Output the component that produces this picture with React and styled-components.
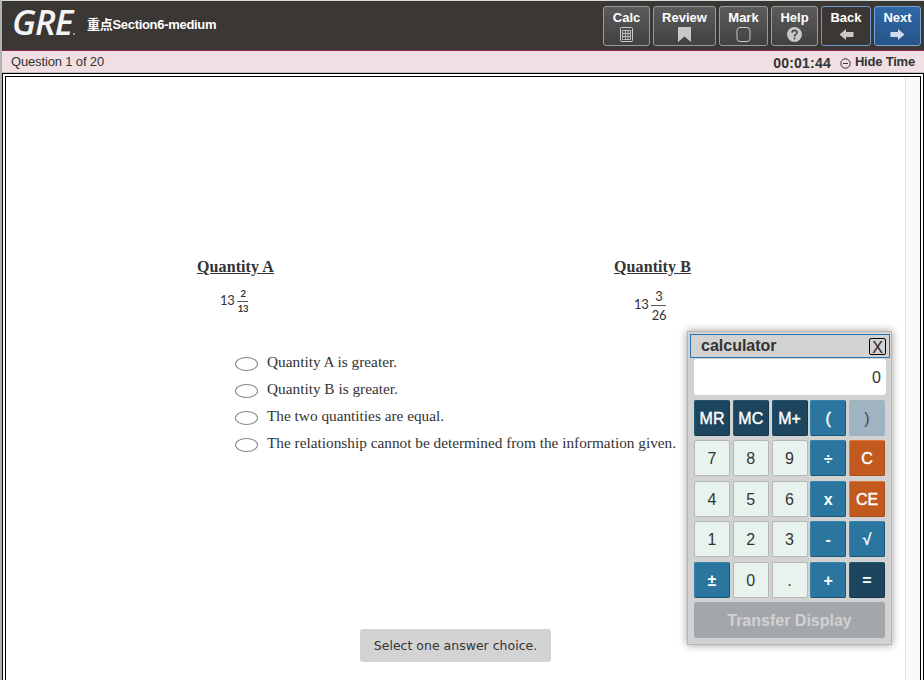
import React from "react";
import styled, { createGlobalStyle, css } from "styled-components";

const Global = createGlobalStyle`
  * { box-sizing: border-box; }
  body { margin: 0; background: #fff; overflow: hidden; font-family: "Liberation Sans", Arial, sans-serif; color: #333; }
  button { font: inherit; padding: 0; margin: 0; }
`;

const Page = styled.div`
  position: relative;
  width: 924px;
  height: 680px;
  display: flex;
  flex-direction: column;
  border-left: 2px solid #b2b2b2;
  border-top: 1px solid #d5dada;
  overflow: hidden;
`;

const Header = styled.header`
  height: 50px;
  flex: none;
  display: flex;
  background: #3b3735;
  border-bottom: 1px solid #8d2553;
`;

const Logo = styled.div`
  width: 66px;
  height: 42px;
  margin: 0 0 0 10px;
  flex: none;
  display: flex;
  align-items: baseline;
  color: #f4f4f4;
  font: italic 600 35px/42px "Open Sans", "Noto Sans", sans-serif;
  letter-spacing: -1px;
  white-space: nowrap;
`;

const LogoDot = styled.span`
  width: 2px;
  height: 2px;
  margin-left: 1px;
  flex: none;
  border-radius: 50%;
  background: #aaa;
`;

const Title = styled.h1`
  margin: 14px 0 0 9px;
  height: 20px;
  font: bold 13px/20px "Liberation Sans", "Noto Sans CJK SC", sans-serif;
  letter-spacing: -0.3px;
  color: #fff;
  white-space: nowrap;
`;

const Tools = styled.nav`
  margin: 5px 3px 0 auto;
  display: flex;
  gap: 3px;
`;

const variants = {
  gray: css`background: linear-gradient(#5c5c5c, #414141); border-color: #9a9a9a;`,
  dark: css`background: #3b3735; border-color: #6f97cb;`,
  blue: css`background: linear-gradient(#2f68a6, #27548a); border-color: #7da3d2;`,
};

const ToolButton = styled.button`
  width: ${(p) => p.$w}px;
  height: 40px;
  border: 1px solid;
  border-radius: 3px;
  display: flex;
  flex-direction: column;
  align-items: center;
  color: #fff;
  ${(p) => variants[p.$variant]}
`;

const ToolLabel = styled.span`
  margin-top: 3px;
  height: 16px;
  font: bold 13px/16px "Liberation Sans", sans-serif;
`;

const ToolIcon = styled.svg`
  width: 17px;
  height: 17px;
`;

const StatusBar = styled.div`
  height: 22px;
  flex: none;
  display: flex;
  align-items: center;
  padding: 0 9px;
  background: #f0e0e4;
  border-bottom: 1px solid #c3bfc0;
`;

const Progress = styled.span`
  font-size: 13px;
  line-height: 20px;
  letter-spacing: -0.15px;
  margin-right: auto;
`;

const Timer = styled.span`
  font-size: 14px;
  font-weight: bold;
  letter-spacing: 0.2px;
  line-height: 20px;
  margin: 2px 9px 0 0;
`;

const HideTime = styled.span`
  font-size: 13px;
  font-weight: bold;
  letter-spacing: -0.2px;
  line-height: 20px;
`;

const MinusIcon = styled.svg`
  width: 11px;
  height: 11px;
  margin: 4px 4px 0 0;
`;

const Frame = styled.main`
  width: 922px;
  height: 640px;
  flex: none;
  display: flex;
  border: 4px double #000;
  background: #fff;
`;

const Content = styled.section`
  flex: 1;
  min-width: 0;
`;

const ScrollTrack = styled.div`
  width: 15px;
  flex: none;
  background: #fafafa;
  border-left: 1px solid #e5e5e5;
`;

const Quantities = styled.div`
  display: flex;
  padding: 180px 0 0 191px;
  height: 275px;
`;

const Quantity = styled.div`
  width: 417px;
  flex: none;
`;

const QuantityTitle = styled.h2`
  margin: 0;
  font: bold 16px/20px "Liberation Serif", serif;
  letter-spacing: 0.1px;
  text-decoration: underline;
`;

const Mixed = styled.div`
  display: flex;
  align-items: center;
  gap: 3px;
  margin: ${(p) => p.$margin};
  font: 13px/14px Lato, "Noto Sans", sans-serif;
  letter-spacing: -0.3px;
  color: #333;
`;

const Whole = styled.span`
  padding-bottom: 3px;
`;

const Fraction = styled.span`
  display: flex;
  flex-direction: column;
  align-items: center;
  width: ${(p) => p.$w}px;
  font-size: ${(p) => p.$size}px;
  font-weight: ${(p) => p.$weight};
  line-height: ${(p) => p.$line}px;
`;

const Bar = styled.span`
  width: 100%;
  height: 1px;
  margin: 1px 0;
  background: #555;
`;

const Choices = styled.ul`
  list-style: none;
  margin: 0;
  padding: 0 0 0 229px;
`;

const Choice = styled.li`
  display: flex;
  height: 27px;
  font: 15.3px/20px "Liberation Serif", serif;
  white-space: nowrap;
`;

const Oval = styled.span`
  width: 23px;
  height: 14px;
  margin: 5px 9px 0 0;
  border: 1px solid #888;
  border-radius: 50%;
`;

const Notice = styled.p`
  width: 191px;
  height: 33px;
  margin: 169px 0 0 354px;
  border-radius: 3px;
  background: #d3d3d3;
  text-align: center;
  font: 12.5px/33px "DejaVu Sans", Verdana, sans-serif;
  white-space: nowrap;
`;

const Calculator = styled.aside`
  position: absolute;
  left: 685px;
  top: 330px;
  width: 205px;
  height: 314px;
  padding: 2px;
  border: 1px solid #b5b5b5;
  background: #d2d2d2;
  box-shadow: 0 0 8px rgba(0, 0, 0, 0.4);
`;

const CalcHeader = styled.div`
  width: 200px;
  height: 24px;
  border: 1px solid #2776b8;
  display: flex;
  justify-content: space-between;
  padding: 0 3px 0 10px;
  font: bold 16px/22px "Liberation Sans", sans-serif;
`;

const CloseButton = styled.button`
  width: 17px;
  height: 17px;
  margin-top: 3px;
  border: 1px solid #000;
  border-radius: 2px;
  background: none;
  color: #222;
  display: grid;
  place-items: center;
  font: 16px/17px "Liberation Sans", sans-serif;
`;

const Display = styled.output`
  display: block;
  width: 192px;
  height: 36px;
  margin: 1px 0 4.9px 4px;
  padding-right: 5px;
  border-radius: 3px;
  background: #fff;
  text-align: right;
  font-size: 16px;
  line-height: 38px;
`;

const Keys = styled.div`
  display: grid;
  grid-template-columns: 36px 36px 36px 36px 36px;
  grid-template-rows: repeat(5, 36px);
  column-gap: 2.75px;
  row-gap: 4.5px;
  margin-left: 4px;
`;

const keyKinds = {
  navy: css`background: #1d455e; border-color: #245675 #15364b #15364b #245675; color: #fff;`,
  teal: css`background: #2b769f; border-color: #3582aa #1b5574 #1b5574 #3582aa; color: #fff;`,
  orange: css`background: #c25a20; border-color: #df7638 #aa4d1a #aa4d1a #df7638; color: #fff;`,
  muted: css`background: #9fb3c1; border-color: #9fb3c1; color: #444;`,
  digit: css`background: #e9f3ee; border-color: #b4b8b6; color: #333;`,
};

const Key = styled.button`
  border: 1px solid;
  border-radius: 2px;
  padding-top: 1px;
  font: ${(p) => (p.$bold ? "bold" : "normal")} 16px/33px "Liberation Sans", sans-serif;
  ${(p) => p.$medium && css`-webkit-text-stroke: 0.4px currentColor;`}
  ${(p) => keyKinds[p.$kind]}
`;

const Transfer = styled.button`
  width: 191px;
  height: 36px;
  margin: 4.1px 0 0 4px;
  border: 0;
  border-radius: 3px;
  background: #a2a7ab;
  color: #d2d2d2;
  padding-top: 2px;
  font: bold 16px/34px "Liberation Sans", sans-serif;
`;

const icons = {
  calc: (
    <>
      <rect x="2.500" y="1.500" width="12" height="14" rx="1" fill="none" stroke="#ccc" />
      <path d="M4.500 4.500h8v9h-8zM4.500 7.500h8M4.500 10.500h8M7.500 4.500v9M10 4.500v9" fill="none" stroke="#bbb" strokeWidth="1" />
    </>
  ),
  flag: <path d="M2 1h13v15L8.500 10.500 2 16z" fill="#c8c8c8" />,
  box: <rect x="2" y="1.500" width="13" height="14" rx="3" fill="none" stroke="#c8c8c8" />,
  help: (
    <>
      <circle cx="8.500" cy="8.500" r="7.500" fill="#c8c8c8" />
      <path d="M6.200 6.800C6.200 3.500 11 3.700 11 6.500c0 2-2.500 1.800-2.500 4" fill="none" stroke="#484848" strokeWidth="1.700" />
      <circle cx="8.500" cy="12.500" r="1" fill="#484848" />
    </>
  ),
  left: <path d="M1.500 8.500L8 3v3h7.500v5H8v3z" fill="#c8c8c8" />,
  right: <path d="M15.500 8.500L9 3v3H1.500v5H9v3z" fill="#cfdbe8" />,
};

const tools = [
  ["Calc", 47, "gray", "calc"],
  ["Review", 63, "gray", "flag"],
  ["Mark", 49, "gray", "box"],
  ["Help", 47, "gray", "help"],
  ["Back", 50, "dark", "left"],
  ["Next", 47, "blue", "right"],
];

const keys = [
  ["MR", "navy"], ["MC", "navy"], ["M+", "navy"], ["(", "teal"], [")", "muted"],
  ["7", "digit"], ["8", "digit"], ["9", "digit"], ["÷", "teal", true], ["C", "orange"],
  ["4", "digit"], ["5", "digit"], ["6", "digit"], ["x", "teal", true], ["CE", "orange"],
  ["1", "digit"], ["2", "digit"], ["3", "digit"], ["-", "teal", true], ["√", "teal"],
  ["±", "teal", true], ["0", "digit"], [".", "digit"], ["+", "teal", true], ["=", "navy", true],
];

const choices = [
  "Quantity A is greater.",
  "Quantity B is greater.",
  "The two quantities are equal.",
  "The relationship cannot be determined from the information given.",
];

export default function App() {
  return (
    <Page>
      <Global />
      <Header>
        <Logo>GRE<LogoDot /></Logo>
        <Title>重点Section6-medium</Title>
        <Tools>
          {tools.map(([label, w, variant, icon]) => (
            <ToolButton key={label} $w={w} $variant={variant}>
              <ToolLabel>{label}</ToolLabel>
              <ToolIcon viewBox="0 0 17 17">{icons[icon]}</ToolIcon>
            </ToolButton>
          ))}
        </Tools>
      </Header>
      <StatusBar>
        <Progress>Question 1 of 20</Progress>
        <Timer>00:01:44</Timer>
        <MinusIcon viewBox="0 0 11 11">
          <path d="M3 5.500h5M5.500 .8a4.700 4.700 0 1 0 0 9.400a4.700 4.700 0 1 0 0-9.400" fill="none" stroke="#333" />
        </MinusIcon>
        <HideTime>Hide Time</HideTime>
      </StatusBar>
      <Frame>
        <Content>
          <Quantities>
            <Quantity>
              <QuantityTitle>Quantity A</QuantityTitle>
              <Mixed $margin="11px 0 0 23px">
                <Whole>13</Whole>
                <Fraction $w={11} $size={9.5} $weight="bold" $line={12}>2<Bar />13</Fraction>
              </Mixed>
            </Quantity>
            <Quantity>
              <QuantityTitle>Quantity B</QuantityTitle>
              <Mixed $margin="11px 0 0 20px">
                <Whole>13</Whole>
                <Fraction $w={15} $size={13} $weight="normal" $line={16}>3<Bar />26</Fraction>
              </Mixed>
            </Quantity>
          </Quantities>
          <Choices>
            {choices.map((text) => (
              <Choice key={text}><Oval />{text}</Choice>
            ))}
          </Choices>
          <Notice>Select one answer choice.</Notice>
        </Content>
        <ScrollTrack />
      </Frame>
      <Calculator>
        <CalcHeader>
          calculator
          <CloseButton>X</CloseButton>
        </CalcHeader>
        <Display>0</Display>
        <Keys>
          {keys.map(([label, kind, bold]) => (
            <Key key={label} $kind={kind} $bold={bold} $medium={!bold && kind !== "digit" && kind !== "muted"}>{label}</Key>
          ))}
        </Keys>
        <Transfer>Transfer Display</Transfer>
      </Calculator>
    </Page>
  );
}
